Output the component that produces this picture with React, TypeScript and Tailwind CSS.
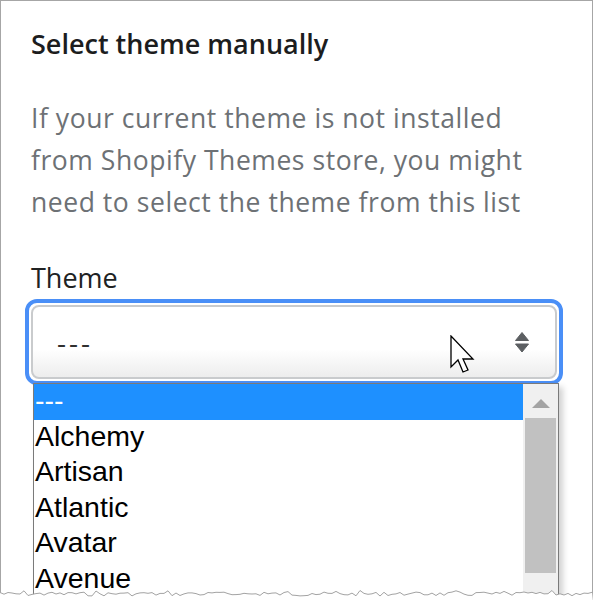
import React from 'react';

const themes = ['---', 'Alchemy', 'Artisan', 'Atlantic', 'Avatar', 'Avenue'];

// jagged "torn paper" edge along the bottom of the capture
function TornEdge() {
  const pts: string[] = [];
  let seed = 7;
  for (let x = 0; x <= 594; x += 4) {
    seed = (seed * 9301 + 49297) % 233280;
    const y = 5 + (seed / 233280) * 4 - (x % 24 === 0 ? 1.5 : 0);
    pts.push(`${x},${y.toFixed(1)}`);
  }
  const line = pts.join(' ');
  return (
    <svg className="absolute left-0 top-[587px]" width="594" height="25" viewBox="0 0 594 25">
      <polygon points={`0,25 ${line} 594,25`} fill="#ffffff" />
      <polyline points={line} fill="none" stroke="#a3a3a3" strokeWidth="1" />
    </svg>
  );
}

function Cursor() {
  return (
    <svg className="absolute left-[450px] top-[335px]" width="26" height="40" viewBox="-1 -1 26 40">
      <path d="M0 0 L0 31 L7 24 L12 36 L17 34 L12 23 L22 23 Z" fill="#ffffff" stroke="#000000" strokeWidth="1.3" strokeLinejoin="miter" />
    </svg>
  );
}

export default function App() {
  return (
    <div className="relative h-[612px] w-[594px] overflow-hidden bg-white">
      <div
        className="relative h-[600px] w-[593px] border-l border-r border-t border-[#a6a6a6] pl-[30px] pt-[26px]"
        style={{ fontFamily: '"Open Sans", "Noto Sans", sans-serif' }}
      >
        <h2 className="text-[27px] font-semibold leading-[34px] text-[#1c1d1e]">Select theme manually</h2>
        <p className="mt-[36px] w-[555px] text-[26.5px] leading-[42px] tracking-[0.55px] text-[#6d7175]">
          If your current theme is not installed
          <br />
          from Shopify Themes store, you might
          <br />
          need to select the theme from this list
        </p>
        <div className="mt-[37px] text-[27px] leading-[36px] text-[#202223]">Theme</div>

        <div className="-ml-[6px] mt-[3px] h-[86px] w-[538px] rounded-[12px] border-[4px] border-[#4a8ff7] p-[2px]">
          <div className="flex h-full items-center justify-between rounded-[8px] border-2 border-[#c9cbcd] bg-gradient-to-b from-white via-white via-60% to-[#ededed] pl-[24px] pr-[26px]">
            <span className="text-[28px] tracking-[3px] text-[#303030]">---</span>
            <svg width="14" height="21" viewBox="0 0 14 21">
              <path d="M7 0.5 L13.5 8.5 L0.5 8.5 Z" fill="#5c5f62" strokeLinejoin="round" stroke="#5c5f62" strokeWidth="1" />
              <path d="M0.5 12 L13.5 12 L7 20 Z" fill="#5c5f62" strokeLinejoin="round" stroke="#5c5f62" strokeWidth="1" />
            </svg>
          </div>
        </div>
      </div>

      {/* native select popup */}
      <div
        className="absolute left-[33px] top-[383px] flex h-[215px] w-[526px] border border-[#7a7a7a] bg-white shadow-[4px_4px_6px_rgba(0,0,0,0.18)]"
        style={{ fontFamily: '"Liberation Sans", Arial, sans-serif' }}
      >
        <div className="flex-1">
          {themes.map((t, i) => (
            <div
              key={t}
              className={
                i === 0
                  ? 'h-[35.5px] bg-[#1e90ff] pl-[1px] text-[28.5px] leading-[32px] text-white'
                  : 'h-[35.5px] pl-[1px] text-[28.5px] leading-[32px] text-black'
              }
            >
              {t}
            </div>
          ))}
        </div>
        <div className="flex w-[35px] flex-col items-center bg-[#f0f0f0] pt-[15px]">
          <svg width="18" height="9" viewBox="0 0 18 9">
            <path d="M9 0 L18 9 L0 9 Z" fill="#a3a3a3" />
          </svg>
          <div className="mt-[10px] h-[155px] w-[31px] bg-[#c1c1c1]" />
        </div>
      </div>

      <Cursor />
      <TornEdge />
    </div>
  );
}
